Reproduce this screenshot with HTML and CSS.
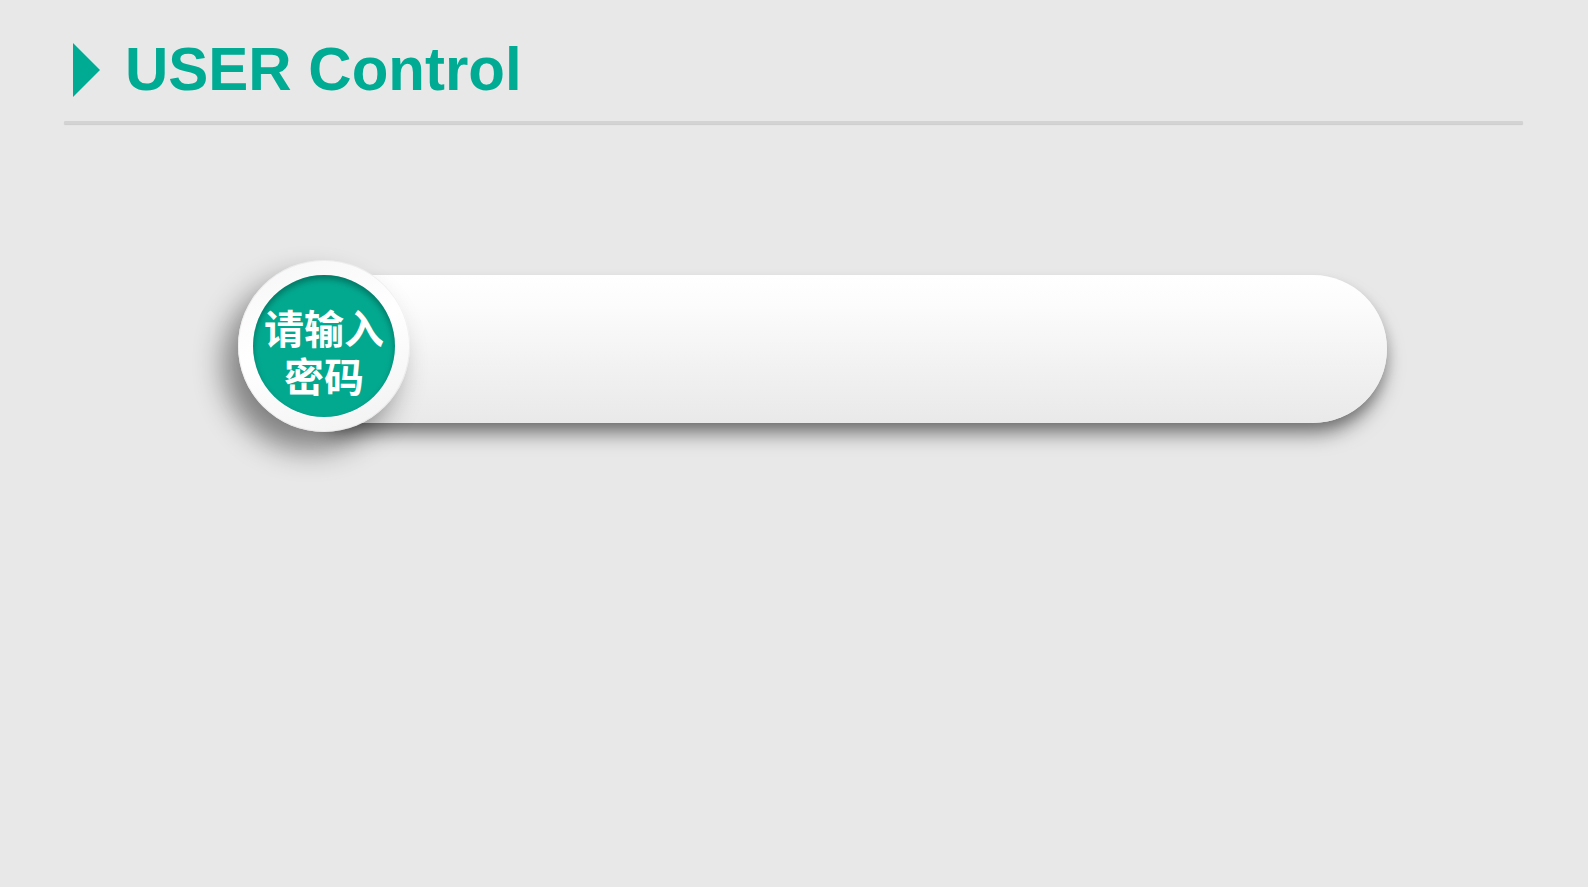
FILE: index.html
```html
<!DOCTYPE html>
<html lang="zh">
<head>
<meta charset="utf-8">
<title>USER Control</title>
<link rel="stylesheet" href="styles.css">
</head>
<body>
<header class="header">
  <span class="marker"></span>
  <h1 class="title">USER Control</h1>
</header>
<div class="rule"></div>
<section class="control">
  <div class="badge">
    <div class="badge-inner">
      <p class="badge-text">请输入<br>密码</p>
    </div>
  </div>
  <div class="field"></div>
</section>
</body>
</html>
```
FILE: styles.css
```css
html, body {
  margin: 0;
  padding: 0;
}
body {
  width: 1588px;
  height: 887px;
  background: #e8e8e8;
  font-family: "Liberation Sans", Arial, sans-serif;
  overflow: hidden;
}
.header {
  display: flex;
  align-items: center;
  padding: 38px 0 0 73px;
}
.marker {
  width: 0;
  height: 0;
  border-left: 27px solid #00ab94;
  border-top: 27px solid transparent;
  border-bottom: 27px solid transparent;
  margin-top: 2px;
}
.title {
  margin: 0 0 0 25px;
  font-size: 60px;
  line-height: 61px;
  font-weight: bold;
  color: #00ab94;
  transform: scaleY(1.03);
}
.rule {
  margin: 22px 65px 0 64px;
  height: 3px;
  background: #d3d3d3;
  box-shadow: 0 1px 1px rgba(0,0,0,0.12);
  border-radius: 1px;
}
.control {
  display: flex;
  align-items: flex-start;
  margin: 136px 0 0 238px;
}
.badge {
  position: relative;
  z-index: 1;
  flex: none;
  width: 172px;
  height: 172px;
  box-sizing: border-box;
  padding: 15px;
  border-radius: 50%;
  background: linear-gradient(160deg, #f6f6f6 0%, #ffffff 45%, #f1f1f1 100%);
  box-shadow: -14px 18px 30px rgba(0,0,0,0.45), inset 0 0 0 1px rgba(0,0,0,0.05);
}
.badge-inner {
  width: 142px;
  height: 142px;
  border-radius: 50%;
  background: #03a98f;
  box-shadow: inset 0 4px 6px rgba(0,0,0,0.3), 0 1px 1px rgba(255,255,255,0.8);
  display: flex;
  align-items: center;
  justify-content: center;
}
.badge-text {
  margin: 0;
  padding-top: 10px;
  color: #ffffff;
  font-family: "Noto Sans CJK SC", "Microsoft YaHei", sans-serif;
  font-weight: bold;
  font-size: 40px;
  line-height: 48px;
  text-align: center;
}
.field {
  flex: none;
  width: 1063px;
  height: 148px;
  margin: 15px 0 0 -86px;
  border-radius: 0 74px 74px 0;
  background: linear-gradient(180deg, #ffffff 0%, #fcfcfc 20%, #f2f2f2 60%, #e9e9e9 100%);
  box-shadow: 0 14px 20px -4px rgba(0,0,0,0.5), 4px 4px 10px rgba(0,0,0,0.08);
}
```
